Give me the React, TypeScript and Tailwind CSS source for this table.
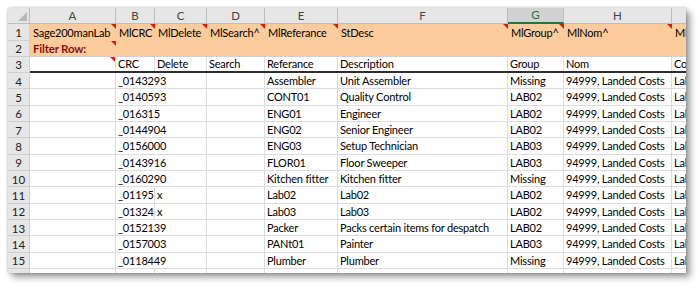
import React from "react";

const FONT = { fontFamily: "Lato, 'Open Sans', sans-serif" };

const letters = ["A", "B", "C", "D", "E", "F", "G", "H", "I"];

const widths = [
  "w-[86px]",
  "w-[39px]",
  "w-[52px]",
  "w-[58px]",
  "w-[73px]",
  "w-[170px]",
  "w-[56px]",
  "w-[108px]",
  "w-[40px]",
];

const titles = ["Sage200manLab", "MlCRC", "MlDelete", "MlSearch^", "MlReferance", "StDesc", "MlGroup^", "MlNom^", "MlCost^"];
const labels = ["", "CRC", "Delete", "Search", "Referance", "Description", "Group", "Nom", "Cost"];

// columns with a comment marker in row 1
const noted = [0, 1, 2, 3, 4, 5, 6, 7];

const rows = [
  ["_0143293", "", "Assembler", "Unit Assembler", "Missing"],
  ["_0140593", "", "CONT01", "Quality Control", "LAB02"],
  ["_016315", "", "ENG01", "Engineer", "LAB02"],
  ["_0144904", "", "ENG02", "Senior Engineer", "LAB02"],
  ["_0156000", "", "ENG03", "Setup Technician", "LAB03"],
  ["_0143916", "", "FLOR01", "Floor Sweeper", "LAB03"],
  ["_0160290", "", "Kitchen fitter", "Kitchen fitter", "Missing"],
  ["_0119532", "x", "Lab02", "Lab02", "LAB02"],
  ["_0132471", "x", "Lab03", "Lab03", "LAB02"],
  ["_0152139", "", "Packer", "Packs certain items for despatch", "LAB02"],
  ["_0157003", "", "PANt01", "Painter", "LAB03"],
  ["_0118449", "", "Plumber", "Plumber", "Missing"],
];

function Marker() {
  return (
    <span className="absolute right-0 top-0 h-0 w-0 border-l-[5px] border-t-[5px] border-l-transparent border-t-[#e8140c]" />
  );
}

function RowNum({ n }: { n: string }) {
  return (
    <div className="flex h-full w-[22px] shrink-0 items-center justify-center border-b border-r border-[#cfcfcf] bg-[#e6e6e6] pt-[1px] text-[11.5px] tracking-normal text-[#222]">
      {n}
    </div>
  );
}

function DataRow({ n, r }: { n: number; r: string[] }) {
  const spill = r[1] === "";
  const cells = ["", r[0], r[1], "", r[2], r[3], r[4], "94999, Landed Costs", "Labour"];
  return (
    <div className="flex h-[16.33px]">
      <RowNum n={String(n)} />
      {cells.map((c, i) => (
        <div
          key={i}
          className={`flex h-full shrink-0 items-center whitespace-nowrap border-b border-[#dcdcdc] pl-[2px] pt-[1px] ${widths[i]} ${
            i === 1 && spill ? "overflow-visible" : "overflow-hidden border-r"
          }`}
        >
          {c}
        </div>
      ))}
    </div>
  );
}

export default function App() {
  return (
    <div className="min-h-screen bg-white p-[8px]" style={FONT}>
      <div className="h-[265px] w-[678px] overflow-hidden bg-white text-[11px] tracking-[-0.2px] text-black shadow-[0_0_3px_rgba(0,0,0,0.25),4px_4px_7px_rgba(0,0,0,0.4)]">
        {/* column letters */}
        <div className="flex h-[16px] bg-[#e6e6e6] text-[11.5px] tracking-normal text-[#444]">
          <div className="relative w-[22px] shrink-0 border-b border-r border-[#bdbdbd]">
            <span className="absolute bottom-[2px] right-[2px] h-0 w-0 border-b-[9px] border-l-[9px] border-b-[#b7b7b7] border-l-transparent" />
          </div>
          {letters.map((l, i) =>
            l === "G" ? (
              <div
                key={l}
                className={`flex shrink-0 items-center justify-center border-b-2 border-r border-b-[#217346] border-r-[#bdbdbd] bg-[#d2d2d2] text-[#217346] ${widths[i]}`}
              >
                {l}
              </div>
            ) : (
              <div
                key={l}
                className={`flex shrink-0 items-center justify-center border-b border-r border-[#bdbdbd] ${widths[i]}`}
              >
                {l}
              </div>
            )
          )}
        </div>

        {/* row 1 */}
        <div className="flex h-[16.5px]">
          <RowNum n="1" />
          <div className="flex bg-[#fccc9c]">
            {titles.map((t, i) => (
              <div
                key={i}
                className={`relative flex shrink-0 items-center overflow-hidden whitespace-nowrap pl-[3px] pt-[1px] ${widths[i]}`}
              >
                {t}
                {noted.includes(i) && <Marker />}
              </div>
            ))}
          </div>
        </div>

        {/* row 2 */}
        <div className="flex h-[16.5px]">
          <RowNum n="2" />
          <div className="flex flex-1 border-b border-[#d0d0d0] bg-[#fccc9c]">
            <div className="relative flex w-[86px] shrink-0 items-center whitespace-nowrap pl-[3px] pt-[1px] text-[11.5px] font-bold text-[#8e0f0f]">
              Filter Row:
              <Marker />
            </div>
          </div>
        </div>

        {/* row 3 */}
        <div className="flex h-[16px]">
          <RowNum n="3" />
          <div className="flex border-b-2 border-[#2e2e2e]">
            {labels.map((t, i) => (
              <div
                key={i}
                className={`relative flex h-full shrink-0 items-center overflow-hidden whitespace-nowrap border-r border-[#dcdcdc] pl-[2px] ${widths[i]}`}
              >
                {t}
                {i === 0 && <Marker />}
              </div>
            ))}
          </div>
        </div>

        {rows.map((r, i) => (
          <DataRow key={i} n={i + 4} r={r} />
        ))}

        {/* row 16, cut off */}
        <div className="flex h-[16.33px]">
          <RowNum n="16" />
          {widths.map((w, i) => (
            <div key={i} className={`h-full shrink-0 border-r border-[#dcdcdc] ${w}`} />
          ))}
        </div>
      </div>
    </div>
  );
}
